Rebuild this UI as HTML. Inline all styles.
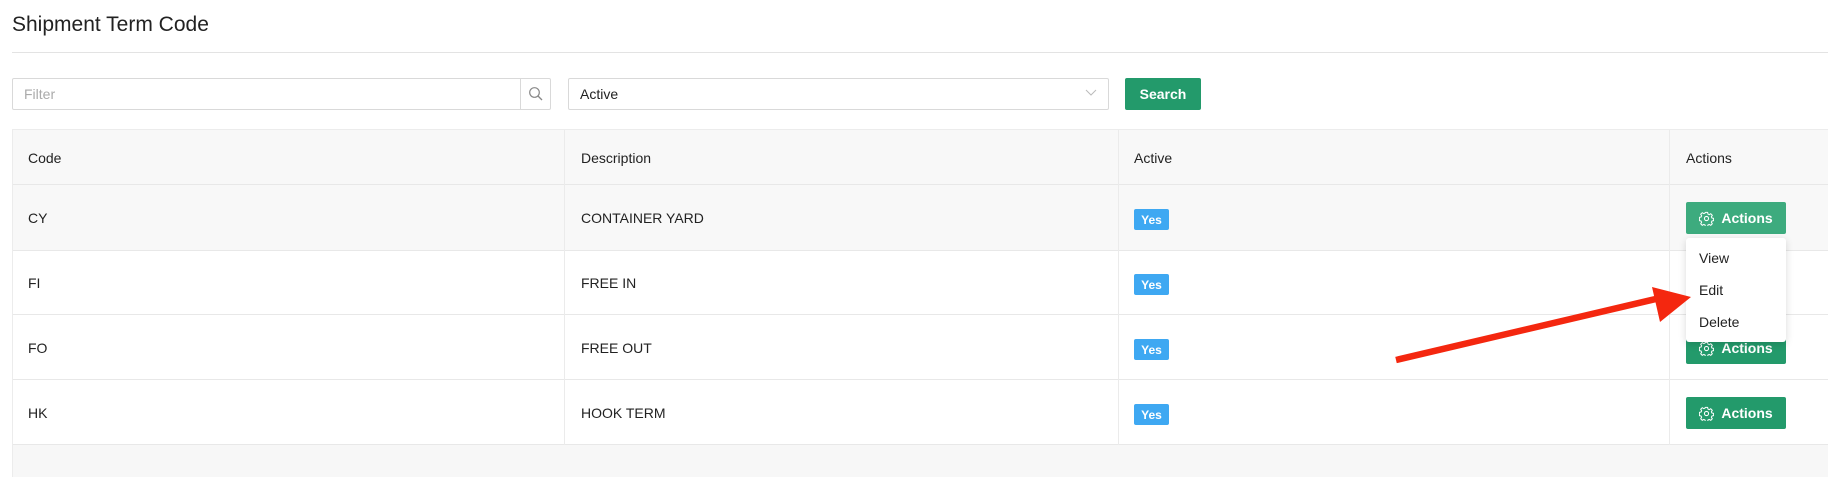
<!DOCTYPE html>
<html><head><meta charset="utf-8"><style>
*{box-sizing:border-box;margin:0;padding:0}
body{width:1828px;height:477px;background:#fff;font-family:"Liberation Sans",Arial,sans-serif;color:#222;position:relative;overflow:hidden;font-size:14px}
.a{position:absolute}
.title{left:12px;top:13px;font-size:21px;color:#222}
.hr{left:12px;right:0;top:52px;height:1px;background:#e3e3e3}
.inp{border:1px solid #d9d9d9;border-radius:2px;height:32px;top:78px}
.btn{background:#239a6b;color:#fff;border-radius:2px;font-weight:bold;font-size:14px;display:flex;align-items:center;justify-content:center}
.row{left:12px;right:0;border-bottom:1px solid #e8e8e8}
.vl{width:1px;background:#ebebeb;top:130px;height:315px}
.t{font-size:14px}
.yes{background:#3ea8f2;color:#fff;font-size:12px;font-weight:bold;width:35px;height:21px;border-radius:2px;display:flex;align-items:center;justify-content:center}
</style></head><body>
<div class="a title">Shipment Term Code</div>
<div class="a hr"></div>
<div class="a inp" style="left:12px;width:539px"><span class="a" style="left:11px;top:7px;color:#aaa">Filter</span>
<div class="a" style="left:507px;top:0;width:1px;height:30px;background:#d9d9d9"></div>
<svg class="a" style="left:515px;top:7px" width="16" height="16" viewBox="0 0 16 16"><circle cx="6.5" cy="6.5" r="4.8" fill="none" stroke="#888" stroke-width="1.2"/><path d="M10 10l4 4" stroke="#888" stroke-width="1.3"/></svg></div>
<div class="a inp" style="left:568px;width:541px"><span class="a" style="left:11px;top:7px">Active</span>
<svg class="a" style="left:516px;top:10px" width="12" height="8" viewBox="0 0 12 8"><path d="M1 1l5 5 5-5" fill="none" stroke="#bbb" stroke-width="1"/></svg></div>
<div class="a btn" style="left:1125px;top:78px;width:76px;height:32px">Search</div>

<div class="a row" style="top:129px;height:56px;background:#f8f8f8;border-top:1px solid #ececec"></div>
<div class="a row" style="top:185px;height:66px;background:#f8f8f8"></div>
<div class="a row" style="top:251px;height:64px"></div>
<div class="a row" style="top:315px;height:65px"></div>
<div class="a row" style="top:380px;height:65px"></div>
<div class="a" style="left:12px;right:0;top:445px;height:32px;background:#f7f7f7"></div>
<div class="a" style="left:12px;top:129px;width:1px;height:348px;background:#ececec"></div>
<div class="a vl" style="left:564px"></div>
<div class="a vl" style="left:1118px"></div>
<div class="a vl" style="left:1669px"></div>

<div class="a t" style="left:28px;top:150px">Code</div>
<div class="a t" style="left:581px;top:150px">Description</div>
<div class="a t" style="left:1134px;top:150px">Active</div>
<div class="a t" style="left:1686px;top:150px">Actions</div>

<div class="a t" style="left:28px;top:210px">CY</div>
<div class="a t" style="left:581px;top:210px">CONTAINER YARD</div>
<div class="a yes" style="left:1134px;top:209px">Yes</div>
<div class="a t" style="left:28px;top:275px">FI</div>
<div class="a t" style="left:581px;top:275px">FREE IN</div>
<div class="a yes" style="left:1134px;top:274px">Yes</div>
<div class="a t" style="left:28px;top:340px">FO</div>
<div class="a t" style="left:581px;top:340px">FREE OUT</div>
<div class="a yes" style="left:1134px;top:339px">Yes</div>
<div class="a t" style="left:28px;top:405px">HK</div>
<div class="a t" style="left:581px;top:405px">HOOK TERM</div>
<div class="a yes" style="left:1134px;top:404px">Yes</div>

<svg width="0" height="0" style="position:absolute"><defs><symbol id="g" viewBox="0 0 16 16"><path d="M6.8 1.5h2.4l.4 1.8 1.3.6 1.6-1 1.7 1.7-1 1.6.6 1.3 1.8.4v2.4l-1.8.4-.6 1.3 1 1.6-1.7 1.7-1.6-1-1.3.6-.4 1.8H6.8l-.4-1.8-1.3-.6-1.6 1-1.7-1.7 1-1.6-.6-1.3-1.8-.4V6.8l1.8-.4.6-1.3-1-1.6 1.7-1.7 1.6 1 1.3-.6z" fill="none" stroke="#fff" stroke-width="1.1" stroke-linejoin="round"/><circle cx="8" cy="8" r="2.2" fill="none" stroke="#fff" stroke-width="1.1"/></symbol></defs></svg>
<div class="a btn" style="left:1686px;top:202px;width:100px;height:32px;background:#3dab7e"><svg width="15" height="15" style="margin-right:7px"><use href="#g"/></svg>Actions</div>
<div class="a btn" style="left:1686px;top:332px;width:100px;height:32px"><svg width="15" height="15" style="margin-right:7px"><use href="#g"/></svg>Actions</div>
<div class="a btn" style="left:1686px;top:397px;width:100px;height:32px"><svg width="15" height="15" style="margin-right:7px"><use href="#g"/></svg>Actions</div>

<div class="a" style="left:1686px;top:238px;width:100px;height:104px;background:#fff;border-radius:3px;box-shadow:0 2px 8px rgba(0,0,0,.15)">
<div class="a t" style="left:13px;top:12px">View</div>
<div class="a t" style="left:13px;top:44px">Edit</div>
<div class="a t" style="left:13px;top:76px">Delete</div>
</div>

<svg class="a" style="left:0;top:0" width="1828" height="477"><path d="M1396 360L1660 298" stroke="#f4270f" stroke-width="6.5"/><path d="M1652 287L1691 297L1660 322Z" fill="#f4270f"/></svg>
</body></html>
